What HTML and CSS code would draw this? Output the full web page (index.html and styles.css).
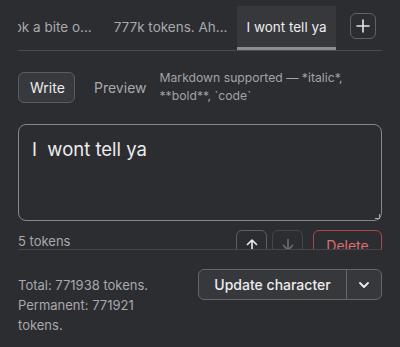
FILE: index.html
```html
<!DOCTYPE html>
<html>
<head>
<meta charset="utf-8">
<link rel="stylesheet" href="styles.css">
</head>
<body>
<div class="app">
  <div class="tabbar">
    <div class="tabs-viewport">
      <div class="tabs">
        <div class="tab first">Took a bite o...</div>
        <div class="tab">777k tokens. Ah...</div>
        <div class="tab active">I wont tell ya</div>
      </div>
    </div>
    <button class="add-btn" aria-label="Add">
      <svg width="14" height="14" viewBox="0 0 14 14"><path d="M7 1v12M1 7h12" stroke="#e6e6e8" stroke-width="1.6" stroke-linecap="round"/></svg>
    </button>
  </div>

  <div class="editor">
    <div class="modes">
      <button class="mode on">Write</button>
      <button class="mode">Preview</button>
      <div class="hint">Markdown supported — *italic*,<br>**bold**, `code`</div>
    </div>
    <div class="textarea">I&nbsp; wont tell ya<span class="grip"></span></div>
    <div class="meta">
      <span class="count">5 tokens</span>
      <div class="actions">
        <button class="icon-btn"><svg width="14" height="14" viewBox="0 0 14 14"><path d="M7 12.5V2M2.5 6.5L7 2l4.5 4.5" stroke="#ececee" stroke-width="1.6" fill="none" stroke-linecap="round" stroke-linejoin="round"/></svg></button>
        <button class="icon-btn dim"><svg width="14" height="14" viewBox="0 0 14 14"><path d="M7 1.5V12M2.5 7.5L7 12l4.5-4.5" stroke="#6c6d71" stroke-width="1.6" fill="none" stroke-linecap="round" stroke-linejoin="round"/></svg></button>
        <button class="delete">Delete</button>
      </div>
    </div>
  </div>

  <div class="footer">
    <div class="totals">Total: 771938 tokens.<br>Permanent: 771921<br>tokens.</div>
    <div class="split">
      <button class="split-main">Update character</button>
      <button class="split-arrow"><svg width="12" height="8" viewBox="0 0 12 8"><path d="M2 2l4 4 4-4" stroke="#ececee" stroke-width="1.8" fill="none" stroke-linecap="round" stroke-linejoin="round"/></svg></button>
    </div>
  </div>
</div>
</body>
</html>
```

FILE: styles.css
```css
* { box-sizing: border-box; }
html, body { margin: 0; padding: 0; }
body {
  background: #2c2d31;
  font-family: Inter, "Noto Sans", sans-serif;
  color: #e4e4e6;
  width: 400px;
  height: 347px;
  overflow: hidden;
}
button { font-family: inherit; }
.app { padding: 0 18px; }

.tabbar {
  display: flex;
  align-items: center;
  height: 51px;
  padding-top: 6px;
  border-bottom: 1px solid #4a4b50;
}
.tabs-viewport {
  flex: 1;
  overflow: hidden;
  align-self: stretch;
}
.tabs {
  display: flex;
  height: 100%;
  margin-left: -30px;
}
.tab {
  flex: none;
  padding: 0 10px;
  display: flex;
  align-items: center;
  font-size: 13.5px;
  color: #a8a9ad;
  white-space: nowrap;
  border-bottom: 3px solid transparent;
}
.tab.first { padding-right: 12px; }
.tab.active {
  background: #37383c;
  color: #ececee;
  border-bottom-color: #8c8d91;
  padding: 0 9px;
}
.add-btn {
  flex: none;
  width: 26px;
  height: 26px;
  margin: 0 6px 4px 11px;
  border: 1px solid #616266;
  border-radius: 6px;
  background: transparent;
  display: flex;
  align-items: center;
  justify-content: center;
  padding: 0;
}

.editor {
  height: 199px;
  overflow: hidden;
  border-bottom: 1px solid #45464a;
  padding-top: 20px;
}
.modes {
  display: flex;
  align-items: center;
  height: 32px;
}
.mode {
  border: 1px solid transparent;
  background: transparent;
  color: #a8a9ad;
  font-size: 14px;
  height: 31px;
  padding: 0 12px;
  border-radius: 6px;
  margin-right: 0;
}
.mode.on {
  background: #38393d;
  border-color: #5b5c60;
  color: #ececee;
  padding: 0 11px;
  width: 57px;
  margin-right: 6px;
}
.hint {
  margin-left: 0;
  font-size: 12.2px;
  line-height: 18px;
  color: #a2a3a7;
}
.textarea {
  position: relative;
  margin-top: 21px;
  height: 97px;
  border: 1px solid #86878b;
  border-radius: 8px;
  padding: 13px 13px;
  font-size: 18.5px;
  color: #ececee;
}
.grip {
  position: absolute;
  right: 1px;
  bottom: 1px;
  width: 5px;
  height: 5px;
  border-right: 1px solid #aaa;
  border-bottom: 1px solid #aaa;
}
.meta {
  display: flex;
  align-items: flex-start;
  justify-content: space-between;
  margin-top: 9px;
}
.count {
  font-size: 13px;
  color: #a8a9ad;
  margin-top: 3px;
}
.actions { display: flex; gap: 5px; }
.icon-btn {
  width: 31px;
  height: 30px;
  border: 1px solid #5e5f63;
  border-radius: 6px;
  background: transparent;
  display: flex;
  align-items: center;
  justify-content: center;
  padding: 0;
}
.icon-btn.dim { border-color: #45464a; }
.delete {
  margin-left: 5px;
  width: 69px;
  height: 30px;
  border: 1px solid #b0474a;
  border-radius: 6px;
  background: transparent;
  color: #df6e6e;
  font-size: 14px;
}

.footer {
  display: flex;
  justify-content: space-between;
  align-items: flex-start;
  padding-top: 19px;
}
.totals {
  font-size: 13px;
  line-height: 20px;
  color: #a8a9ad;
  padding-top: 6px;
}
.split {
  display: flex;
  height: 31px;
  border: 1px solid #65666a;
  border-radius: 6px;
  background: #37383c;
  overflow: hidden;
}
.split-main {
  background: transparent;
  border: none;
  color: #ececee;
  font-size: 14px;
  font-weight: 500;
  padding: 0;
  white-space: nowrap;
  width: 147px;
}
.split-arrow {
  width: 35px;
  background: transparent;
  border: none;
  border-left: 1px solid #65666a;
  display: flex;
  align-items: center;
  justify-content: center;
  padding: 0;
}
```
